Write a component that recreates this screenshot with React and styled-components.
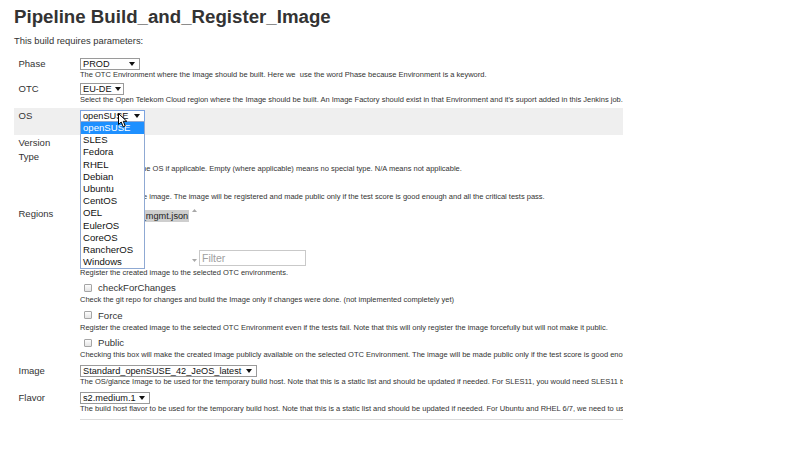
import React from "react";
import styled, { createGlobalStyle } from "styled-components";

const Global = createGlobalStyle`
  html, body { margin: 0; padding: 0; background: #fff; }
  body { font-family: "Liberation Sans", Arial, sans-serif; color: #333; }
`;

const Page = styled.div`
  padding: 0 14px;
  width: 800px;
  height: 450px;
  box-sizing: border-box;
  overflow: hidden;
`;

const Title = styled.h1`
  margin: 0;
  padding-top: 5.5px;
  font-size: 18.7px;
  line-height: 22px;
  font-weight: bold;
  color: #333;
`;

const Intro = styled.p`
  margin: 7.5px 0 0;
  font-size: 9.4px;
  line-height: 12px;
`;

const Table = styled.div`
  margin-top: 9px;
  width: 609px;
  overflow: hidden;
  display: flex;
  flex-direction: column;
`;

const Param = styled.div`
  display: grid;
  grid-template-columns: 66px 1fr;
  padding: ${(p) => p.$pad || "2px 0 1px"};
  margin-top: ${(p) => p.$mt || 0}px;
  background: ${(p) => (p.$highlight ? "#efefef" : "transparent")};
`;

const Label = styled.div`
  padding: ${(p) => p.$pt || 0}px 14px 0 4.5px;
  font-size: 9.5px;
  line-height: ${(p) => p.$lh || 12}px;
  color: #333;
`;

const Value = styled.div`
  display: flex;
  flex-direction: column;
  min-width: 0;
`;

const ControlLine = styled.div`
  display: flex;
  align-items: ${(p) => (p.$bottom ? "flex-end" : "center")};
  height: ${(p) => p.$h || 12}px;
  margin-bottom: ${(p) => p.$mb || 0}px;
  position: relative;
`;

const Description = styled.div`
  font-size: 7.5px;
  line-height: 10px;
  height: 10px;
  white-space: nowrap;
  color: #333;
`;

const SelectBox = styled.div`
  position: relative;
  display: inline-flex;
  align-items: center;
  justify-content: space-between;
  box-sizing: border-box;
  width: ${(p) => p.$w}px;
  height: 12px;
  border: 1px solid ${(p) => (p.$focused ? "#7ba3e0" : "#9a9a9a")};
  background: #fff;
  padding: 0 4px 0 2px;
  font-size: 9.2px;
  line-height: 10px;
  color: #111;
  white-space: nowrap;
`;

const Arrow = styled.svg`
  flex: none;
  margin-left: 3px;
`;

const DropList = styled.ul`
  position: absolute;
  z-index: 10;
  top: 100%;
  left: -1px;
  width: 65px;
  box-sizing: border-box;
  margin: 0;
  padding: 0;
  list-style: none;
  background: #fff;
  border: 1px solid #8fa9d3;
`;

const DropItem = styled.li`
  height: 12.2px;
  line-height: 12.2px;
  padding-left: 2px;
  font-size: 9.6px;
  color: ${(p) => (p.$active ? "#fff" : "#111")};
  background: ${(p) => (p.$active ? "#1e90ff" : "transparent")};
`;

const Cursor = styled.svg`
  position: absolute;
  z-index: 11;
  left: 37px;
  top: 2px;
`;

const CheckLine = styled.div`
  display: flex;
  align-items: center;
  height: 14.5px;
`;

const CheckBox = styled.span`
  display: inline-block;
  box-sizing: border-box;
  width: 8px;
  height: 8px;
  margin-left: 4px;
  border: 1px solid #a5a5a5;
  border-radius: 1px;
  background: linear-gradient(#fdfdfd, #e4e4e4);
`;

const CheckLabel = styled.span`
  margin-left: 6px;
  font-size: 9.6px;
  color: #333;
`;

const ListBox = styled.div`
  display: flex;
  width: 118px;
  height: 61px;
  box-sizing: border-box;
  background: #fff;
`;

const ListOptions = styled.div`
  flex: 1;
  min-width: 0;
  overflow: hidden;
`;

const ListOption = styled.div`
  display: inline-block;
  height: 12px;
  line-height: 12px;
  padding: 0 1px 0 2px;
  font-size: 9.2px;
  white-space: nowrap;
  color: #222;
  background: ${(p) => (p.$selected ? "#cecece" : "transparent")};
`;

const ScrollTrack = styled.div`
  width: 8px;
  display: flex;
  flex-direction: column;
  justify-content: space-between;
  align-items: center;
  padding: 4px 0;
  box-sizing: border-box;
  background: #fff;
`;

const FilterInput = styled.div`
  box-sizing: border-box;
  width: 107px;
  height: 16px;
  margin-left: 1px;
  border: 1px solid #c9c9c9;
  padding-left: 2px;
  font-size: 10.5px;
  line-height: 14px;
  color: #a0a0a0;
  background: #fff;
`;

const Divider = styled.div`
  margin: 4px 0 0 66px;
  border-top: 1.5px solid #dcdcdc;
`;

const DownArrow = () => (
  <Arrow width="6" height="4" viewBox="0 0 6 4">
    <path d="M0 0 L6 0 L3 4 Z" fill="#111" />
  </Arrow>
);

const Select = ({ w, value, focused, children }) => (
  <SelectBox $w={w} $focused={focused}>
    <span>{value}</span>
    <DownArrow />
    {children}
  </SelectBox>
);

const osList = [
  "openSUSE",
  "SLES",
  "Fedora",
  "RHEL",
  "Debian",
  "Ubuntu",
  "CentOS",
  "OEL",
  "EulerOS",
  "CoreOS",
  "RancherOS",
  "Windows",
];

const CheckParam = ({ label, desc }) => (
  <Param $pad="2px 0 1px">
    <Label />
    <Value>
      <CheckLine>
        <CheckBox />
        <CheckLabel>{label}</CheckLabel>
      </CheckLine>
      <Description>{desc}</Description>
    </Value>
  </Param>
);

export default function App() {
  return (
    <>
      <Global />
      <Page>
        <Title>Pipeline Build_and_Register_Image</Title>
        <Intro>This build requires parameters:</Intro>
        <Table>
          <Param>
            <Label>Phase</Label>
            <Value>
              <ControlLine>
                <Select w={60} value="PROD" />
              </ControlLine>
              <Description>
                The OTC Environment where the Image should be built. Here we{"\u00a0"} use the word Phase because Environment is a keyword.
              </Description>
            </Value>
          </Param>
          <Param>
            <Label>OTC</Label>
            <Value>
              <ControlLine>
                <Select w={44} value="EU-DE" />
              </ControlLine>
              <Description>
                Select the Open Telekom Cloud region where the Image should be built. An Image Factory should exist in that Environment and it's suport added in this Jenkins job.
              </Description>
            </Value>
          </Param>
          <Param $highlight $mt={2} $pad="2px 0 3px">
            <Label>OS</Label>
            <Value>
              <ControlLine>
                <Select w={65} value="openSUSE" focused>
                  <DropList>
                    {osList.map((os, i) => (
                      <DropItem key={os} $active={i === 0}>
                        {os}
                      </DropItem>
                    ))}
                  </DropList>
                  <Cursor width="10" height="15" viewBox="0 0 10 15">
                    <path
                      d="M0.5 0.5 L0.5 11.5 L3.2 9 L5.2 13.8 L7.2 13 L5.3 8.3 L8.8 8.3 Z"
                      fill="#fff"
                      stroke="#000"
                      strokeWidth="1"
                      strokeLinejoin="round"
                    />
                  </Cursor>
                </Select>
              </ControlLine>
              <Description />
            </Value>
          </Param>
          <Param $pad="1px 0 1px">
            <Label $lh={14.4}>Version Type</Label>
            <Value>
              <ControlLine $h={28}>
                <Select w={50} value="" />
              </ControlLine>
              <Description>
                Select the type of the OS if applicable. Empty (where applicable) means no special type. N/A means not applicable.
              </Description>
            </Value>
          </Param>
          <CheckParam
            label="Test"
            desc="Run the tests on the image. The image will be registered and made public only if the test score is good enough and all the critical tests pass."
          />
          <Param $pad="2px 0 1px">
            <Label $pt={3}>Regions</Label>
            <Value>
              <ControlLine $h={61} $mb={2} $bottom>
                <ListBox>
                  <ListOptions>
                    <ListOption $selected>regions_eu-de_mgmt.json</ListOption>
                  </ListOptions>
                  <ScrollTrack>
                    <svg width="5" height="3" viewBox="0 0 5 3">
                      <path d="M0 3 L5 3 L2.5 0 Z" fill="#a8a8a8" />
                    </svg>
                    <svg width="5" height="3" viewBox="0 0 5 3">
                      <path d="M0 0 L5 0 L2.5 3 Z" fill="#a8a8a8" />
                    </svg>
                  </ScrollTrack>
                </ListBox>
                <FilterInput>Filter</FilterInput>
              </ControlLine>
              <Description>
                Register the created image to the selected OTC environments.
              </Description>
            </Value>
          </Param>
          <CheckParam
            label="checkForChanges"
            desc="Check the git repo for changes and build the Image only if changes were done. (not implemented completely yet)"
          />
          <CheckParam
            label="Force"
            desc="Register the created image to the selected OTC Environment even if the tests fail. Note that this will only register the image forcefully but will not make it public."
          />
          <CheckParam
            label="Public"
            desc="Checking this box will make the created image publicly available on the selected OTC Environment. The image will be made public only if the test score is good enough and all the critical tests pass."
          />
          <Param $pad="4px 0 1px">
            <Label>Image</Label>
            <Value>
              <ControlLine>
                <Select w={177} value="Standard_openSUSE_42_JeOS_latest" />
              </ControlLine>
              <Description>
                The OS/glance Image to be used for the temporary build host. Note that this is a static list and should be updated if needed. For SLES11, you would need SLES11 based build host.
              </Description>
            </Value>
          </Param>
          <Param $pad="4px 0 1px">
            <Label>Flavor</Label>
            <Value>
              <ControlLine>
                <Select w={70} value="s2.medium.1" />
              </ControlLine>
              <Description>
                The build host flavor to be used for the temporary build host. Note that this is a static list and should be updated if needed. For Ubuntu and RHEL 6/7, we need to use a bigger flavor.
              </Description>
            </Value>
          </Param>
          <Divider />
        </Table>
      </Page>
    </>
  );
}
